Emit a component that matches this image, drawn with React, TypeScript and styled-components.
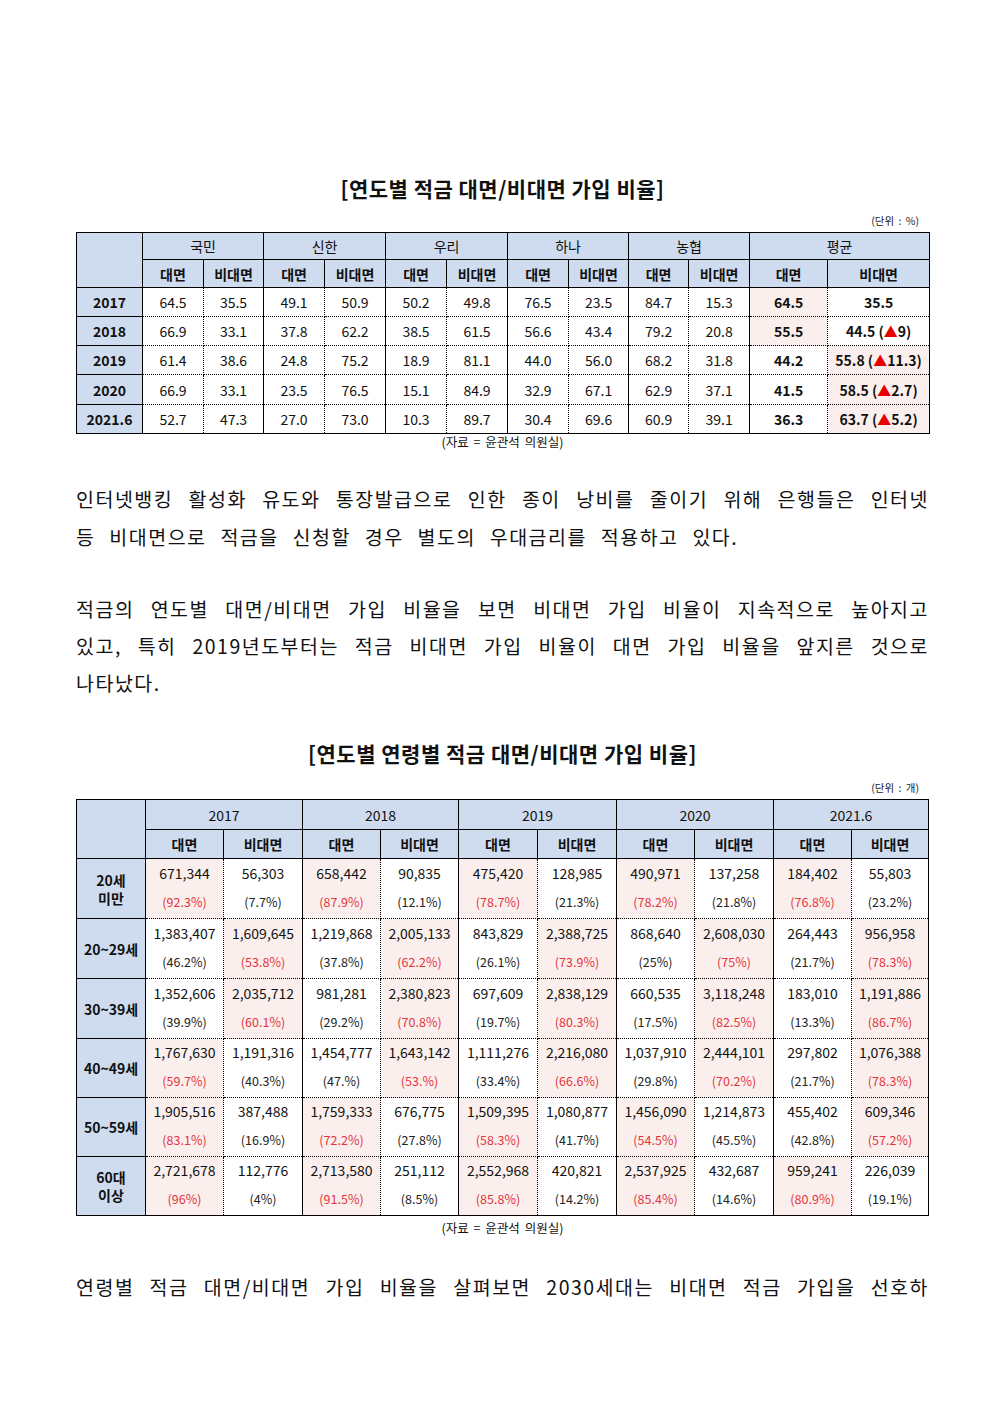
import React from 'react'
import styled, { createGlobalStyle } from 'styled-components'

const GlobalStyle = createGlobalStyle`
  html, body {
    margin: 0;
    padding: 0;
    background: #ffffff;
  }
  body {
    font-family: 'Noto Sans CJK KR', 'Noto Sans', sans-serif;
    color: #111111;
  }
`

const BLUE = '#cfdcef'
const PINK = '#fbefed'
const RED = '#e3343c'

const Page = styled.div`
  width: 992px;
  box-sizing: border-box;
  padding: 173px 63px 80px 76px;
`

const Title = styled.h2<{ $gap?: number }>`
  margin: ${(p) => p.$gap ?? 0}px 0 0;
  height: 30px;
  line-height: 30px;
  text-align: center;
  font-size: 21px;
  font-weight: 700;
  letter-spacing: 0.5px;
`

const Unit = styled.div<{ $gap: number }>`
  margin: ${(p) => p.$gap}px 10px 4px 0;
  height: 14px;
  line-height: 14px;
  text-align: right;
  font-size: 10.5px;
  color: #222;
  word-spacing: 2px;
`

const Source = styled.div<{ $gap: number }>`
  margin-top: ${(p) => p.$gap}px;
  height: 16px;
  line-height: 16px;
  text-align: center;
  font-size: 12.5px;
  word-spacing: 2px;
`

const Para = styled.div<{ $gap: number }>`
  margin-top: ${(p) => p.$gap}px;
  font-size: 19.5px;
  color: #111;
`

const Line = styled.div<{ $fill?: boolean; $h?: number }>`
  height: ${(p) => p.$h ?? 38}px;
  line-height: ${(p) => p.$h ?? 38}px;
  letter-spacing: 1.5px;
  word-spacing: 8px;
  text-align: ${(p) => (p.$fill ? 'justify' : 'left')};
  text-align-last: ${(p) => (p.$fill ? 'justify' : 'left')};
  white-space: ${(p) => (p.$fill ? 'normal' : 'nowrap')};
`

const Table = styled.table`
  width: 853px;
  border-collapse: collapse;
  table-layout: fixed;
  border: 1px solid #000;
  font-size: 14px;
`

const Head = styled.th<{ $bold?: boolean }>`
  background: ${BLUE};
  border: 1px solid #000;
  font-weight: ${(p) => (p.$bold ? 700 : 400)};
  padding: 0;
  text-align: center;
  vertical-align: middle;
`

const RowHead = styled.th`
  background: ${BLUE};
  border: 1px solid #000;
  font-weight: 700;
  padding: 0;
  text-align: center;
  line-height: 18px;
`

const Cell = styled.td<{ $solid?: boolean; $hl?: boolean; $bold?: boolean }>`
  border: 1px dotted #000;
  border-right-style: ${(p) => (p.$solid ? 'solid' : 'dotted')};
  background: ${(p) => (p.$hl ? PINK : '#fff')};
  font-weight: ${(p) => (p.$bold ? 700 : 400)};
  padding: 0;
  text-align: center;
  vertical-align: middle;
  white-space: nowrap;
`

const Stack = styled.div`
  display: flex;
  flex-direction: column;
  align-items: center;
  justify-content: space-between;
  height: 58px;
  padding: 3px 0 6px;
  box-sizing: border-box;
  line-height: 20px;
`

const Pct = styled.span<{ $red?: boolean }>`
  font-size: 12.5px;
  color: ${(p) => (p.$red ? RED : '#222')};
`

const Up = styled.span`
  color: #e60000;
`

const banks = ['국민', '신한', '우리', '하나', '농협']

const rates: Array<[string, string[], string, string, string, boolean]> = [
  ['2017', ['64.5', '35.5', '49.1', '50.9', '50.2', '49.8', '76.5', '23.5', '84.7', '15.3'], '64.5', '35.5', '', true],
  ['2018', ['66.9', '33.1', '37.8', '62.2', '38.5', '61.5', '56.6', '43.4', '79.2', '20.8'], '55.5', '44.5', '9', true],
  ['2019', ['61.4', '38.6', '24.8', '75.2', '18.9', '81.1', '44.0', '56.0', '68.2', '31.8'], '44.2', '55.8', '11.3', false],
  ['2020', ['66.9', '33.1', '23.5', '76.5', '15.1', '84.9', '32.9', '67.1', '62.9', '37.1'], '41.5', '58.5', '2.7', false],
  ['2021.6', ['52.7', '47.3', '27.0', '73.0', '10.3', '89.7', '30.4', '69.6', '60.9', '39.1'], '36.3', '63.7', '5.2', false],
]

const years = ['2017', '2018', '2019', '2020', '2021.6']

const ages: Array<[string[], string[]]> = [
  [['20세', '미만'], ['671,344', '92.3%', '56,303', '7.7%', '658,442', '87.9%', '90,835', '12.1%', '475,420', '78.7%', '128,985', '21.3%', '490,971', '78.2%', '137,258', '21.8%', '184,402', '76.8%', '55,803', '23.2%']],
  [['20~29세'], ['1,383,407', '46.2%', '1,609,645', '53.8%', '1,219,868', '37.8%', '2,005,133', '62.2%', '843,829', '26.1%', '2,388,725', '73.9%', '868,640', '25%', '2,608,030', '75%', '264,443', '21.7%', '956,958', '78.3%']],
  [['30~39세'], ['1,352,606', '39.9%', '2,035,712', '60.1%', '981,281', '29.2%', '2,380,823', '70.8%', '697,609', '19.7%', '2,838,129', '80.3%', '660,535', '17.5%', '3,118,248', '82.5%', '183,010', '13.3%', '1,191,886', '86.7%']],
  [['40~49세'], ['1,767,630', '59.7%', '1,191,316', '40.3%', '1,454,777', '47.%', '1,643,142', '53.%', '1,111,276', '33.4%', '2,216,080', '66.6%', '1,037,910', '29.8%', '2,444,101', '70.2%', '297,802', '21.7%', '1,076,388', '78.3%']],
  [['50~59세'], ['1,905,516', '83.1%', '387,488', '16.9%', '1,759,333', '72.2%', '676,775', '27.8%', '1,509,395', '58.3%', '1,080,877', '41.7%', '1,456,090', '54.5%', '1,214,873', '45.5%', '455,402', '42.8%', '609,346', '57.2%']],
  [['60대', '이상'], ['2,721,678', '96%', '112,776', '4%', '2,713,580', '91.5%', '251,112', '8.5%', '2,552,968', '85.8%', '420,821', '14.2%', '2,537,925', '85.4%', '432,687', '14.6%', '959,241', '80.9%', '226,039', '19.1%']],
]

const rateCols = [66, 61, 60, 61, 61, 61, 61, 61, 60, 60, 61, 78, 102]
const ageCols = [69, 78, 79, 78, 78, 79, 79, 78, 79, 78, 77]
const rateRows = [29, 29, 29, 30, 29]
const ageRows = [60, 60, 60, 59, 59, 59]

const RateTable = () => (
  <Table>
    <colgroup>
      {rateCols.map((w, i) => (
        <col key={i} style={{ width: w }} />
      ))}
    </colgroup>
    <thead>
      <tr style={{ height: 27 }}>
        <Head rowSpan={2} />
        {banks.map((b) => (
          <Head key={b} colSpan={2}>{b}</Head>
        ))}
        <Head colSpan={2}>평균</Head>
      </tr>
      <tr style={{ height: 28 }}>
        {[...banks, '평균'].map((b) => (
          <React.Fragment key={b}>
            <Head $bold>대면</Head>
            <Head $bold>비대면</Head>
          </React.Fragment>
        ))}
      </tr>
    </thead>
    <tbody>
      {rates.map(([year, vals, avgF, avgN, up, faceWins], r) => (
        <tr key={year} style={{ height: rateRows[r] }}>
          <RowHead>{year}</RowHead>
          {vals.map((v, i) => (
            <Cell key={i} $solid={i % 2 === 1}>{v}</Cell>
          ))}
          <Cell $bold $hl={faceWins}>{avgF}</Cell>
          <Cell $bold $hl={!faceWins} $solid>
            {avgN}
            {up && (
              <>
                {' ('}
                <Up>▲</Up>
                {up})
              </>
            )}
          </Cell>
        </tr>
      ))}
    </tbody>
  </Table>
)

const AgeTable = () => (
  <Table>
    <colgroup>
      {ageCols.map((w, i) => (
        <col key={i} style={{ width: w }} />
      ))}
    </colgroup>
    <thead>
      <tr style={{ height: 30 }}>
        <Head rowSpan={2} />
        {years.map((y) => (
          <Head key={y} colSpan={2}>{y}</Head>
        ))}
      </tr>
      <tr style={{ height: 29 }}>
        {years.map((y) => (
          <React.Fragment key={y}>
            <Head $bold>대면</Head>
            <Head $bold>비대면</Head>
          </React.Fragment>
        ))}
      </tr>
    </thead>
    <tbody>
      {ages.map(([label, vals], r) => (
        <tr key={label.join('')} style={{ height: ageRows[r] }}>
          <RowHead>
            {label.map((l) => (
              <div key={l}>{l}</div>
            ))}
          </RowHead>
          {years.map((y, g) => {
            const face = vals[g * 4 + 1]
            const non = vals[g * 4 + 3]
            const faceWins = parseFloat(face) > parseFloat(non)
            return (
              <React.Fragment key={y}>
                <Cell $hl={faceWins}>
                  <Stack>
                    <span>{vals[g * 4]}</span>
                    <Pct $red={faceWins}>({face})</Pct>
                  </Stack>
                </Cell>
                <Cell $hl={!faceWins} $solid>
                  <Stack>
                    <span>{vals[g * 4 + 2]}</span>
                    <Pct $red={!faceWins}>({non})</Pct>
                  </Stack>
                </Cell>
              </React.Fragment>
            )
          })}
        </tr>
      ))}
    </tbody>
  </Table>
)

export default function App() {
  return (
    <>
      <GlobalStyle />
      <Page>
        <Title>[연도별 적금 대면/비대면 가입 비율]</Title>
        <Unit $gap={11}>(단위 : %)</Unit>
        <RateTable />
        <Source $gap={0}>(자료 = 윤관석 의원실)</Source>

        <Para $gap={30}>
          <Line $fill>인터넷뱅킹 활성화 유도와 통장발급으로 인한 종이 낭비를 줄이기 위해 은행들은 인터넷</Line>
          <Line>등 비대면으로 적금을 신청할 경우 별도의 우대금리를 적용하고 있다.</Line>
        </Para>

        <Para $gap={34}>
          <Line $fill $h={37}>적금의 연도별 대면/비대면 가입 비율을 보면 비대면 가입 비율이 지속적으로 높아지고</Line>
          <Line $fill $h={37}>있고, 특히 2019년도부터는 적금 비대면 가입 비율이 대면 가입 비율을 앞지른 것으로</Line>
          <Line $h={37}>나타났다.</Line>
        </Para>

        <Title $gap={37}>[연도별 연령별 적금 대면/비대면 가입 비율]</Title>
        <Unit $gap={13}>(단위 : 개)</Unit>
        <AgeTable />
        <Source $gap={4}>(자료 = 윤관석 의원실)</Source>

        <Para $gap={32}>
          <Line $fill>연령별 적금 대면/비대면 가입 비율을 살펴보면 2030세대는 비대면 적금 가입을 선호하</Line>
        </Para>
      </Page>
    </>
  )
}
